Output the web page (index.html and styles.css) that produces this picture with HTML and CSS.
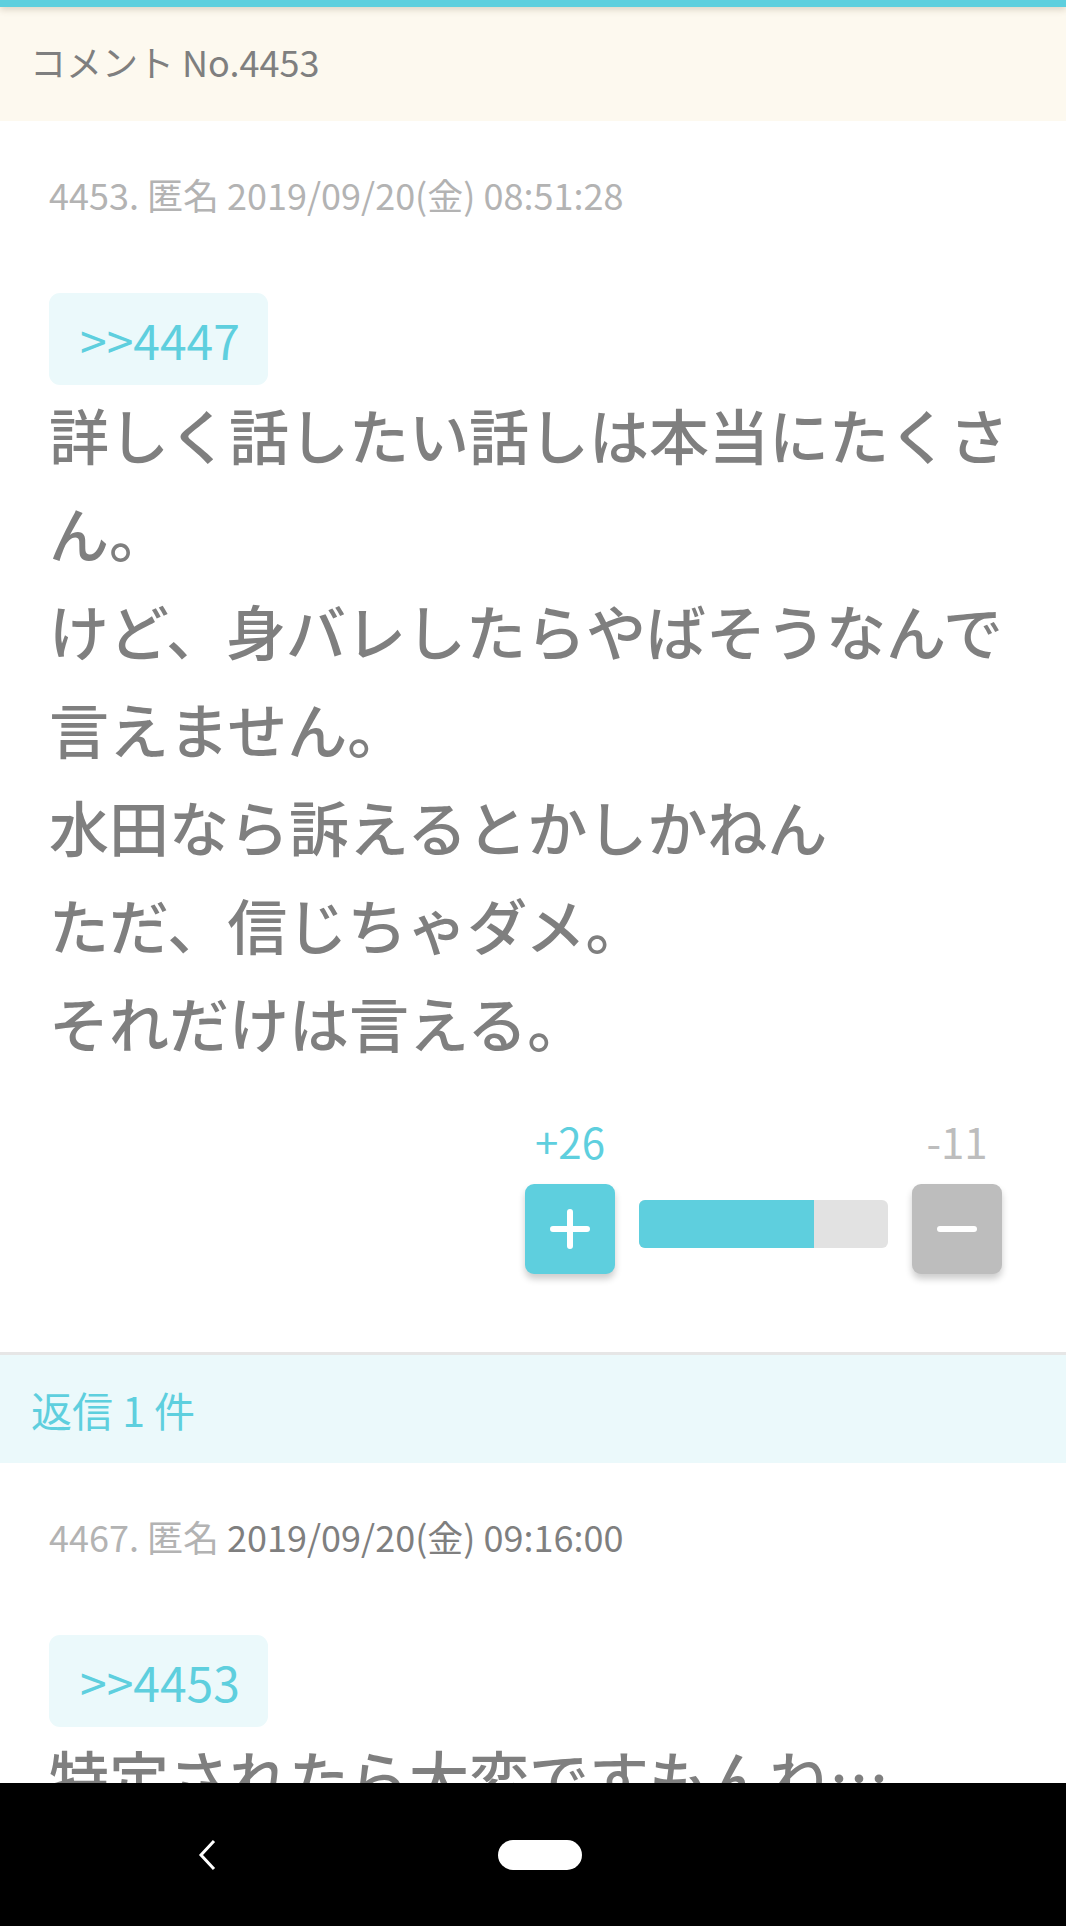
FILE: index.html
```html
<!DOCTYPE html>
<html lang="ja">
<head>
<meta charset="utf-8">
<link rel="stylesheet" href="styles.css">
</head>
<body>
<div class="screen">
  <div class="topbar"></div>
  <div class="content">
    <div class="header">コメント No.4453</div>

    <div class="comment">
      <div class="meta">4453. 匿名 2019/09/20(金) 08:51:28</div>
      <div class="anchor">&gt;&gt;4447</div>
      <div class="body">詳しく話したい話しは本当にたくさん。<br>けど、身バレしたらやばそうなんで言えません。<br>水田なら訴えるとかしかねん<br>ただ、信じちゃダメ。<br>それだけは言える。</div>
      <div class="votes">
        <div class="vote-col">
          <div class="count plus-count">+26</div>
          <div class="btn btn-plus">
            <svg width="40" height="40" viewBox="0 0 40 40"><path d="M20 3V37M3 20H37" stroke="#fff" stroke-width="6" stroke-linecap="round" fill="none"/></svg>
          </div>
        </div>
        <div class="bar"><div class="bar-fill" style="width:70.3%"></div></div>
        <div class="vote-col">
          <div class="count minus-count">-11</div>
          <div class="btn btn-minus">
            <svg width="40" height="40" viewBox="0 0 40 40"><path d="M3 20H37" stroke="#fff" stroke-width="6" stroke-linecap="round" fill="none"/></svg>
          </div>
        </div>
      </div>
    </div>

    <div class="replies">返信 1 件</div>

    <div class="comment">
      <div class="meta"><span>4467. 匿名</span> <span class="date">2019/09/20(金) 09:16:00</span></div>
      <div class="anchor">&gt;&gt;4453</div>
      <div class="body">特定されたら大変ですもんね…</div>
    </div>
  </div>
  <div class="navbar">
    <svg class="nav-back" width="22" height="32" viewBox="0 0 22 32"><path d="M18 2L5 16L18 30" stroke="#fff" stroke-width="3" fill="none"/></svg>
    <div class="nav-home"></div>
  </div>
</div>
</body>
</html>
```
FILE: styles.css
```css
html, body {
  margin: 0;
  padding: 0;
}
body {
  font-family: "Noto Sans CJK JP", "Noto Sans", sans-serif;
  background: #fff;
}
.screen {
  width: 1066px;
  height: 1926px;
  display: flex;
  flex-direction: column;
  overflow: hidden;
}
.topbar {
  height: 7px;
  background: #5ecfde;
  box-shadow: 0 2px 7px rgba(90, 70, 40, 0.25);
  position: relative;
  z-index: 2;
  flex: none;
}
.content {
  flex: 1;
  overflow: hidden;
}
.header {
  height: 114px;
  background: #fdf9ef;
  color: #7f7f7f;
  font-size: 36px;
  display: flex;
  align-items: center;
  padding-left: 30px;
  padding-bottom: 6px;
  box-sizing: border-box;
}
.comment {
  padding: 53px 49px 78px 49px;
  border-bottom: 3px solid #e6e6e6;
}
.meta {
  font-size: 36px;
  line-height: 40px;
  color: #b3b3b3;
}
.meta .date {
  color: #7f7f7f;
}
.anchor {
  display: inline-block;
  margin-top: 79px;
  height: 92px;
  line-height: 92px;
  padding: 0 28px 0 31px;
  background: #ebf9fb;
  color: #5ecfde;
  font-size: 48px;
  border-radius: 11px;
}
.body {
  font-size: 60px;
  line-height: 98px;
  color: #7f7f7f;
  font-weight: 500;
}
.votes {
  display: flex;
  justify-content: flex-end;
  align-items: flex-end;
  gap: 24px;
  margin-top: 40px;
  margin-right: 15px;
}
.vote-col {
  display: flex;
  flex-direction: column;
  align-items: center;
  gap: 13px;
}
.count {
  font-size: 42px;
  line-height: 60px;
}
.plus-count { color: #5ecfde; }
.minus-count { color: #bdbdbd; }
.btn {
  width: 90px;
  height: 90px;
  border-radius: 9px;
  display: flex;
  align-items: center;
  justify-content: center;
  box-shadow: 0 5px 7px rgba(0, 0, 0, 0.2);
}
.btn-plus { background: #5ecfde; }
.btn-minus { background: #bdbdbd; }
.bar {
  width: 249px;
  height: 48px;
  background: #e2e2e2;
  border-radius: 6px;
  overflow: hidden;
  margin-bottom: 26px;
}
.bar-fill {
  height: 100%;
  background: #5ecfde;
}
.replies {
  height: 108px;
  background: #ebf9fb;
  color: #5ecfde;
  font-size: 41px;
  display: flex;
  align-items: center;
  padding-left: 31px;
}
.comment:last-child {
  border-bottom: none;
}
.navbar {
  flex: none;
  height: 143px;
  background: #000;
  display: flex;
  align-items: center;
  gap: 280px;
  padding-left: 196px;
  box-sizing: border-box;
}
.nav-back {
  flex: none;
}
.nav-home {
  width: 84px;
  height: 30px;
  border-radius: 15px;
  background: #fff;
}
```
